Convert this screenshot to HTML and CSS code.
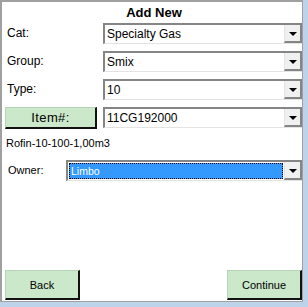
FILE: index.html
```html
<!DOCTYPE html>
<html>
<head>
<meta charset="utf-8">
<link rel="stylesheet" href="styles.css">
</head>
<body>
<div class="panel">
  <div class="title">Add New</div>
  <div class="content">
    <div class="row">
      <div class="label">Cat:</div>
      <div class="sel"><div class="val">Specialty Gas</div><div class="arr"><span class="tri"></span></div></div>
    </div>
    <div class="row">
      <div class="label">Group:</div>
      <div class="sel"><div class="val">Smix</div><div class="arr"><span class="tri"></span></div></div>
    </div>
    <div class="row">
      <div class="label">Type:</div>
      <div class="sel"><div class="val">10</div><div class="arr"><span class="tri"></span></div></div>
    </div>
    <div class="row item-row">
      <div class="btn item-btn">Item#:</div>
      <div class="sel"><div class="val">11CG192000</div><div class="arr"><span class="tri"></span></div></div>
    </div>
    <div class="desc">Rofin-10-100-1,00m3</div>
    <div class="row owner-row">
      <div class="label owner-label">Owner:</div>
      <div class="sel"><div class="val hl"><span>Limbo</span></div><div class="arr"><span class="tri"></span></div></div>
    </div>
  </div>
  <div class="footer">
    <div class="btn foot-btn">Back</div>
    <div class="btn foot-btn">Continue</div>
  </div>
</div>
</body>
</html>
```
FILE: styles.css
```css
html, body {
  margin: 0;
  padding: 0;
}
body {
  background: #bcd3ea;
  width: 308px;
  height: 307px;
  font-family: "Liberation Sans", Arial, sans-serif;
  color: #000;
}
.panel {
  width: 300px;
  height: 299px;
  background: #fff;
  border-top: 2px solid #a0a0a0;
  border-left: 2px solid #a0a0a0;
  border-right: 1px solid #a0a0a0;
  border-bottom: 1px solid #a0a0a0;
  display: flex;
  flex-direction: column;
}
.title {
  height: 21px;
  line-height: 21px;
  text-align: center;
  font-weight: bold;
  font-size: 13px;
  padding-left: 4px;
}
.content {
  padding-left: 3px;
  display: flex;
  flex-direction: column;
}
.row {
  display: flex;
  height: 21px;
  margin-bottom: 7px;
  align-items: flex-start;
}
.label {
  width: 96px;
  padding-left: 2px;
  font-size: 12px;
  line-height: 21px;
}
.owner-label {
  width: 58px;
  padding-left: 3px;
  font-size: 11px;
}
.sel {
  flex: 1;
  display: flex;
  height: 21px;
  box-sizing: border-box;
  border-top: 2px solid #858585;
  border-left: 2px solid #858585;
  border-bottom: 1px solid #e3e3e3;
  background: #fff;
}
.val {
  flex: 1;
  padding-left: 2px;
  font-size: 12px;
  line-height: 18px;
  white-space: nowrap;
  overflow: hidden;
}
.arr {
  width: 18px;
  box-sizing: border-box;
  background: #f0f0f0;
  border-left: 1px solid #e3e3e3;
  border-right: 2px solid #858585;
  border-bottom: 2px solid #858585;
  display: flex;
  align-items: center;
  justify-content: center;
}
.tri {
  width: 0;
  height: 0;
  border-left: 4px solid transparent;
  border-right: 4px solid transparent;
  border-top: 4px solid #000;
  margin-top: 1px;
}
.item-row {
  height: 22px;
}
.btn {
  box-sizing: border-box;
  background: #cbe8ca;
  border-top: 1px solid #b8d4b8;
  border-left: 1px solid #b8d4b8;
  border-right: 2px solid #111;
  border-bottom: 2px solid #111;
  display: flex;
  align-items: center;
  justify-content: center;
  font-size: 11px;
}
.item-btn {
  width: 92px;
  height: 22px;
  margin-right: 6px;
  font-size: 13px;
  letter-spacing: 0.4px;
}
.desc {
  font-size: 11px;
  line-height: 14px;
  padding-left: 1px;
  margin-top: 0;
  margin-bottom: 10px;
}
.owner-row {
  height: 21px;
}
.hl {
  margin: 1px;
  padding-left: 0;
  background: #3399ff;
  border: 1px dotted #000;
  color: #fff;
  font-size: 10.5px;
  line-height: 14px;
}
.hl span {
  padding-left: 1px;
}
.footer {
  margin-top: auto;
  margin-bottom: 1px;
  padding-left: 3px;
  display: flex;
  justify-content: space-between;
}
.foot-btn {
  width: 75px;
  height: 30px;
}
```
